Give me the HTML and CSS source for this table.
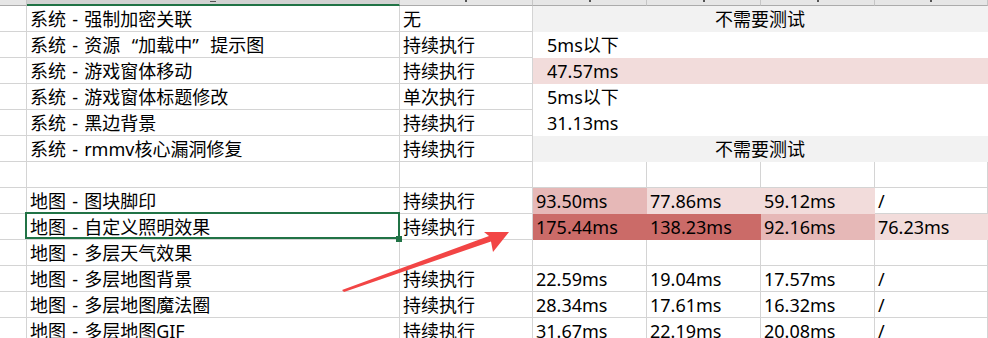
FILE: index.html
```html
<!DOCTYPE html>
<html lang="zh-CN">
<head>
<meta charset="utf-8">
<title>Sheet</title>
<link rel="stylesheet" href="styles.css">
</head>
<body>
<div class="sheet">
  <div class="hd"></div>
  <div class="hd sel"><i class="mk mk-b"></i></div>
  <div class="hd"><i class="mk mk-c"></i></div>
  <div class="hd"><i class="mk"></i></div>
  <div class="hd"><i class="mk"></i></div>
  <div class="hd"><i class="mk"></i></div>
  <div class="hd"><i class="mk"></i></div>

  <div class="c"></div><div class="c">系统 - 强制加密关联</div><div class="c">无</div><div class="c span gray">不需要测试</div>
  <div class="c"></div><div class="c">系统 - 资源<span class="ql">“</span>加载中<span class="qr">”</span>提示图</div><div class="c">持续执行</div><div class="c span white ind">5ms以下</div>
  <div class="c"></div><div class="c">系统 - 游戏窗体移动</div><div class="c">持续执行</div><div class="c span pink ind">47.57ms</div>
  <div class="c"></div><div class="c">系统 - 游戏窗体标题修改</div><div class="c">单次执行</div><div class="c span white ind">5ms以下</div>
  <div class="c"></div><div class="c">系统 - 黑边背景</div><div class="c">持续执行</div><div class="c span white ind">31.13ms</div>
  <div class="c"></div><div class="c">系统 - rmmv核心漏洞修复</div><div class="c">持续执行</div><div class="c span gray">不需要测试</div>

  <div class="c"></div><div class="c"></div><div class="c"></div><div class="c"></div><div class="c"></div><div class="c"></div><div class="c"></div>

  <div class="c"></div><div class="c">地图 - 图块脚印</div><div class="c">持续执行</div><div class="c mid">93.50ms</div><div class="c light">77.86ms</div><div class="c light">59.12ms</div><div class="c">/</div>
  <div class="c"></div><div class="c selected">地图 - 自定义照明效果<i class="handle"></i></div><div class="c">持续执行</div><div class="c dark">175.44ms</div><div class="c dark">138.23ms</div><div class="c mid">92.16ms</div><div class="c light">76.23ms</div>
  <div class="c"></div><div class="c">地图 - 多层天气效果</div><div class="c"></div><div class="c"></div><div class="c"></div><div class="c"></div><div class="c"></div>
  <div class="c"></div><div class="c">地图 - 多层地图背景</div><div class="c">持续执行</div><div class="c">22.59ms</div><div class="c">19.04ms</div><div class="c">17.57ms</div><div class="c">/</div>
  <div class="c"></div><div class="c">地图 - 多层地图魔法圈</div><div class="c">持续执行</div><div class="c">28.34ms</div><div class="c">17.61ms</div><div class="c">16.32ms</div><div class="c">/</div>
  <div class="c"></div><div class="c">地图 - 多层地图GIF</div><div class="c">持续执行</div><div class="c">31.67ms</div><div class="c">22.19ms</div><div class="c">20.08ms</div><div class="c">/</div>
</div>
<svg class="arrow" width="988" height="338" viewBox="0 0 988 338">
  <polygon points="342,290 344,292 491,241.5 493,252 509,232 484,232 489,236" fill="#f24545"/>
</svg>
</body>
</html>
```
FILE: styles.css
```css
html, body {
  margin: 0;
  padding: 0;
}
body {
  width: 988px;
  height: 338px;
  overflow: hidden;
  background: #ffffff;
  font-family: "Noto Sans", "Noto Sans CJK SC", sans-serif;
  font-size: 18px;
  color: #000;
  position: relative;
}
.sheet {
  display: grid;
  grid-template-columns: 27px 373px 133px 114px 114px 114px 113px;
  grid-template-rows: 6px;
  grid-auto-rows: 26px;
}
.hd {
  box-sizing: border-box;
  height: 6px;
  background: #e6e6e6;
  border-right: 1px solid #c6c6c6;
  border-bottom: 1px solid #ababab;
  overflow: hidden;
  display: flex;
  justify-content: center;
  align-items: flex-start;
}
.mk {
  display: block;
  width: 2px;
  height: 2px;
  background: #555;
}
.mk-b {
  width: 6px;
  height: 1px;
  margin-top: 1px;
}
.hd.sel {
  background: #d2d2d2;
  border-bottom: 2px solid #217346;
}
.c {
  box-sizing: border-box;
  border-right: 1px solid #d4d4d4;
  border-bottom: 1px solid #d4d4d4;
  padding-left: 3px;
  line-height: 26px;
  white-space: nowrap;
  overflow: hidden;
  word-spacing: 1.5px;
}
.span {
  grid-column: 4 / span 4;
}
.gray {
  background: #f2f2f2;
  border-color: #f2f2f2;
  text-align: center;
  padding-left: 0;
}
.white {
  border-color: #ffffff;
}
.pink {
  background: #f2dcdb;
  border-color: #f2dcdb;
}
.ind {
  padding-left: 14px;
}
.light {
  background: #f2dcdb;
  border-color: #f2dcdb;
}
.mid {
  background: #e6b8b7;
  border-color: #e6b8b7;
}
.dark {
  background: #cb6b68;
  border-color: #cb6b68;
}
.ql, .qr {
  display: inline-block;
  width: 18px;
}
.ql { text-align: right; }
.qr { text-align: left; }
.selected {
  position: relative;
  overflow: visible;
}
.selected::after {
  content: "";
  position: absolute;
  left: -2px;
  right: -1px;
  top: -2px;
  bottom: 0;
  border: 2px solid #217346;
}
.handle {
  position: absolute;
  right: -3px;
  bottom: -3px;
  width: 6px;
  height: 6px;
  background: #217346;
  z-index: 2;
}
.arrow {
  position: absolute;
  left: 0;
  top: 0;
  pointer-events: none;
}
```
